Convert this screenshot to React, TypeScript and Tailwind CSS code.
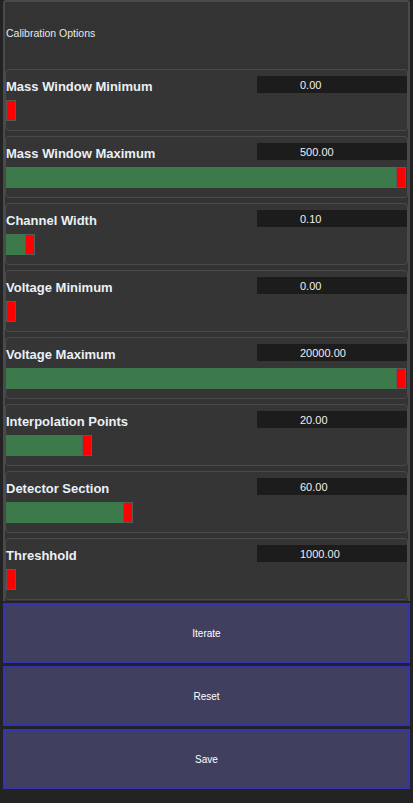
const params = [
  { label: "Mass Window Minimum", value: "0.00", fill: 0 },
  { label: "Mass Window Maximum", value: "500.00", fill: 1 },
  { label: "Channel Width", value: "0.10", fill: 0.049 },
  { label: "Voltage Minimum", value: "0.00", fill: 0 },
  { label: "Voltage Maximum", value: "20000.00", fill: 1 },
  { label: "Interpolation Points", value: "20.00", fill: 0.195 },
  { label: "Detector Section", value: "60.00", fill: 0.3 },
  { label: "Threshhold", value: "1000.00", fill: 0 },
];

const buttons = ["Iterate", "Reset", "Save"];

const SliderRow = ({ fill }: { fill: number }) => {
  // track is 400px, handle 10px
  const left = Math.round(fill * 390);
  return (
    <div className="relative h-[21px] w-[400px] mt-[7px]">
      <div className="absolute left-0 top-0 h-full bg-[#3c7a4b]" style={{ width: left + 1 }} />
      <div
        className="absolute top-0 h-full w-[10px] bg-[#ff0000] border border-[#5a5a5a]"
        style={{ left }}
      />
    </div>
  );
};

export default function App() {
  return (
    <div className="w-[413px] h-[803px] bg-[#232323] flex flex-col" style={{ fontFamily: "'Liberation Sans', sans-serif" }}>
      <div className="ml-[3px] w-[407px] bg-[#333333] border-l-2 border-t-2 border-r-2 border-[#4a4a4a] rounded-t-[3px] flex flex-col pb-[1px]">
        <div className="h-[67px] flex items-center pl-[1px] pb-[3px] text-[10.5px] text-[#e8e8e8]">
          Calibration Options
        </div>
        <div className="flex flex-col gap-[5px]">
          {params.map((p) => (
            <div key={p.label} className="h-[62px] border border-[#4a4a4a] rounded-[4px] bg-[#353535] flex flex-col pt-[6px]">
              <div className="flex items-center h-[17px]">
                <div className="flex-1 text-[13px] font-bold text-[#eaf0f6] leading-none pt-[3px]">{p.label}</div>
                <div className="w-[150px] h-[17px] bg-[#1c1c1c] flex items-center pl-[43px] pt-[2px] text-[11px] text-[#f0f0f0]">
                  {p.value}
                </div>
              </div>
              <SliderRow fill={p.fill} />
            </div>
          ))}
        </div>
      </div>
      <div className="ml-[3px] w-[407px] flex flex-col gap-[3px] mt-[2px]">
        {buttons.map((b) => (
          <div key={b} className="h-[60px] bg-[#403f5f] border-2 border-[#3434b0] flex items-center justify-center text-[10px] text-white">
            {b}
          </div>
        ))}
      </div>
    </div>
  );
}
